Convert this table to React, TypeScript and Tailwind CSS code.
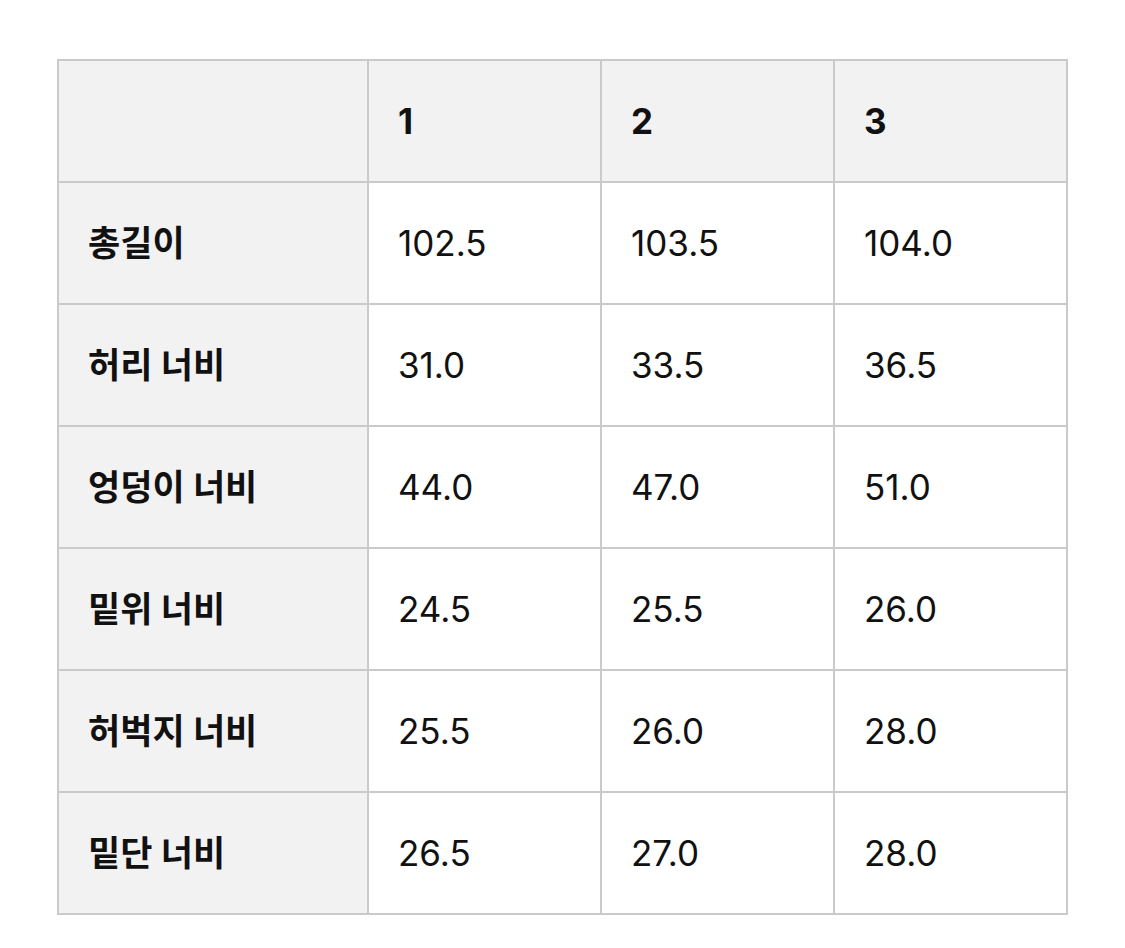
const header = ["", "1", "2", "3"];

const rows: [string, string, string, string][] = [
  ["총길이", "102.5", "103.5", "104.0"],
  ["허리 너비", "31.0", "33.5", "36.5"],
  ["엉덩이 너비", "44.0", "47.0", "51.0"],
  ["밑위 너비", "24.5", "25.5", "26.0"],
  ["허벅지 너비", "25.5", "26.0", "28.0"],
  ["밑단 너비", "26.5", "27.0", "28.0"],
];

const font = { fontFamily: 'Inter, "Noto Sans CJK KR", sans-serif' };

const App = () => {
  return (
    <div className="min-h-[948px] w-[1125px] bg-white pt-[59px] pl-[57px]" style={font}>
      <table className="w-[1009px] table-fixed border-collapse text-[35px] text-[#111]">
        <colgroup>
          <col className="w-[310px]" />
          <col className="w-[233px]" />
          <col className="w-[233px]" />
          <col className="w-[233px]" />
        </colgroup>
        <thead>
          <tr className="h-[122px] bg-[#f2f2f2]">
            {header.map((h, i) => (
              <th
                key={i}
                className="border-2 border-[#cacaca] px-[29px] text-left font-bold"
              >
                {h}
              </th>
            ))}
          </tr>
        </thead>
        <tbody>
          {rows.map((row) => (
            <tr key={row[0]} className="h-[122px]">
              <td className="border-2 border-[#cacaca] bg-[#f2f2f2] px-[29px] font-bold">
                {row[0]}
              </td>
              {row.slice(1).map((v, i) => (
                <td key={i} className="border-2 border-[#cacaca] px-[29px] font-normal">
                  {v}
                </td>
              ))}
            </tr>
          ))}
        </tbody>
      </table>
    </div>
  );
};

export default App;
